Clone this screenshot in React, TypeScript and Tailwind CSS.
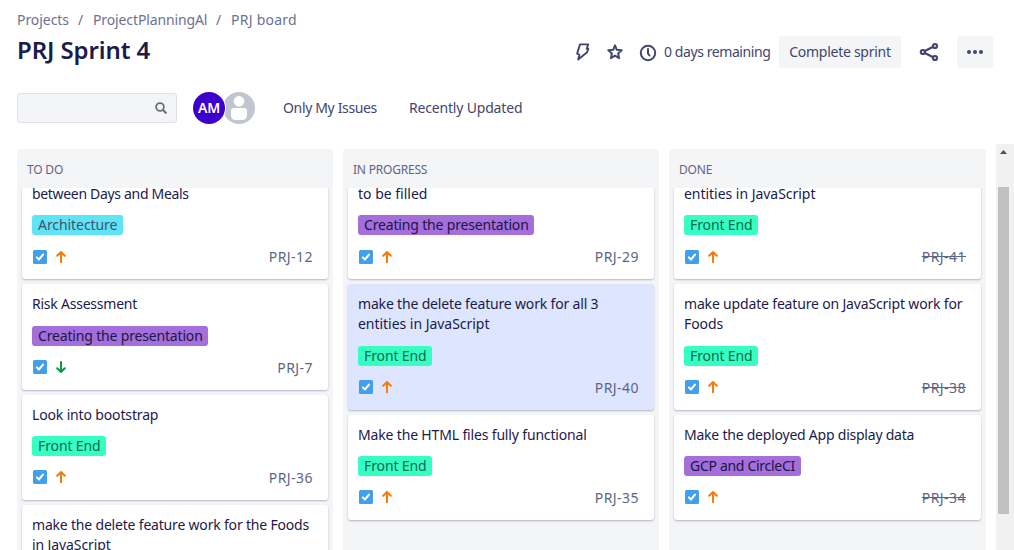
import { Fragment } from "react";

type Line = { text: string; tracking: string };
type Issue = { id: string; title: Line[]; label: keyof typeof LABELS; low?: boolean; active?: boolean };

const LABELS = {
  Architecture: "w-[91px] bg-[#5fe3f6] text-[#42526e] tracking-[-0.07px]",
  "Creating the presentation": "w-[176px] bg-[#a46edb] text-[#201547] tracking-[-0.17px]",
  "Front End": "w-[74px] bg-[#36ffc4] text-[#0b6b4b] tracking-[-0.12px]",
  "GCP and CircleCI": "w-[117px] bg-[#a46edb] text-[#201547] tracking-[-0.3px]",
};

const COLUMNS: { name: string; done?: boolean; issues: Issue[] }[] = [
  {
    name: "TO DO",
    issues: [
      { id: "PRJ-12", title: [{ text: "between Days and Meals", tracking: "tracking-[-0.32px]" }], label: "Architecture" },
      { id: "PRJ-7", title: [{ text: "Risk Assessment", tracking: "tracking-[-0.23px]" }], label: "Creating the presentation", low: true },
      { id: "PRJ-36", title: [{ text: "Look into bootstrap", tracking: "tracking-[-0.15px]" }], label: "Front End" },
      {
        id: "PRJ-37",
        title: [
          { text: "make the delete feature work for the Foods", tracking: "tracking-[-0.19px]" },
          { text: "in JavaScript", tracking: "tracking-[-0.1px]" },
        ],
        label: "Front End",
      },
    ],
  },
  {
    name: "IN PROGRESS",
    issues: [
      { id: "PRJ-29", title: [{ text: "to be filled", tracking: "tracking-[0px]" }], label: "Creating the presentation" },
      {
        id: "PRJ-40",
        title: [
          { text: "make the delete feature work for all 3", tracking: "tracking-[-0.17px]" },
          { text: "entities in JavaScript", tracking: "tracking-[-0.03px]" },
        ],
        label: "Front End",
        active: true,
      },
      { id: "PRJ-35", title: [{ text: "Make the HTML files fully functional", tracking: "tracking-[-0.16px]" }], label: "Front End" },
    ],
  },
  {
    name: "DONE",
    done: true,
    issues: [
      { id: "PRJ-41", title: [{ text: "entities in JavaScript", tracking: "tracking-[-0.03px]" }], label: "Front End" },
      {
        id: "PRJ-38",
        title: [
          { text: "make update feature on JavaScript work for", tracking: "tracking-[-0.17px]" },
          { text: "Foods", tracking: "tracking-[-0.1px]" },
        ],
        label: "Front End",
      },
      { id: "PRJ-34", title: [{ text: "Make the deployed App display data", tracking: "tracking-[-0.23px]" }], label: "GCP and CircleCI" },
    ],
  },
];

function TaskIcon() {
  return (
    <svg width="14" height="14" viewBox="0 0 14 14">
      <rect width="14" height="14" rx="1.5" fill="#429fec" />
      <path d="M3.9 7.4l2 2.1 4.1-4.9" fill="none" stroke="#fff" strokeWidth="2" strokeLinecap="round" strokeLinejoin="round" />
    </svg>
  );
}

function PriorityIcon({ low }: { low?: boolean }) {
  return (
    <svg width="10" height="14" viewBox="0 0 10 14" fill="none" strokeWidth="2" strokeLinecap="round" strokeLinejoin="round">
      {low ? (
        <path d="M5 2v10M1.2 8.2L5 12l3.8-3.8" stroke="#0b9a43" />
      ) : (
        <path d="M5 12.2V2M1.2 5.8L5 2l3.8 3.8" stroke="#f57c0a" />
      )}
    </svg>
  );
}

function Card({ issue, done }: { issue: Issue; done?: boolean }) {
  return (
    <article
      className={`rounded-[3px] p-[10px] shadow-[0_1px_2px_rgba(9,20,66,0.28)] ${issue.active ? "bg-[#dee5ff]" : "bg-white"}`}
    >
      <h3 className="whitespace-nowrap text-[14px] leading-[20px] text-[#1b1b4b]">
        {issue.title.map((line, i) => (
          <Fragment key={line.text}>
            {i > 0 && <br />}
            <span className={line.tracking}>{line.text}</span>
          </Fragment>
        ))}
      </h3>
      <div className={`mt-[11.7px] h-[20px] whitespace-nowrap rounded-[3px] pl-[6px] text-[14px] leading-[20px] ${LABELS[issue.label]}`}>
        {issue.label}
      </div>
      <div className="mt-[12px] flex h-[21.75px] items-start pl-px pr-[5px]">
        <div className="flex gap-[9px] pt-[2.2px]">
          <TaskIcon />
          <PriorityIcon low={issue.low} />
        </div>
        <span className={`ml-auto text-[14px] leading-[20px] tracking-[0.45px] text-[#5e6584] ${done ? "line-through" : ""}`}>
          {issue.id}
        </span>
      </div>
    </article>
  );
}

export default function App() {
  return (
    <div className="flex h-[550px] w-[1014px] flex-col overflow-hidden bg-white font-['Noto_Sans',sans-serif] text-[14px] text-[#42466e]">
      <nav className="mt-[10px] flex h-[20px] pl-[17px] leading-[20px] text-[#6b7290]">
        <span className="w-[61px] tracking-[-0.05px]">Projects</span>
        <span className="w-[15px]">/</span>
        <span className="w-[123px] tracking-[-0.12px]">ProjectPlanningAl</span>
        <span className="w-[15px]">/</span>
        <span className="tracking-[0.25px]">PRJ board</span>
      </nav>
      <header className="flex h-[44px] items-center pl-[17px] pr-[21px]">
        <h1 className="mb-[4px] mr-auto text-[24px] font-semibold leading-[28px] tracking-[-0.1px] text-[#1b1b4b]">PRJ Sprint 4</h1>
        <svg className="mr-[17px]" width="16" height="18" viewBox="0 0 16 18" fill="none" stroke="#42466e" strokeWidth="1.9" strokeLinejoin="round">
          <path d="M6 1.4h8.2l-1.5 4.4h1.6l-1.2 3.4-8.9 7.3 1.2-4.9-2.3-.9z" />
        </svg>
        <svg className="mr-[16px]" width="16" height="16" viewBox="0 0 16 16" fill="none" stroke="#42466e" strokeWidth="2" strokeLinejoin="round">
          <path d="M8 1.4l1.8 4.4 4.9.4-3.6 3.2 1 4.7L8 11.7l-4.1 2.4 1-4.7-3.6-3.2 4.9-.4z" />
        </svg>
        <svg className="mr-[7px] mt-[2px]" width="18" height="18" viewBox="0 0 18 18" fill="none" stroke="#42466e" strokeWidth="2" strokeLinecap="round" strokeLinejoin="round">
          <circle cx="9" cy="9" r="7.2" />
          <path d="M9 5v4.5l1.5 2" />
        </svg>
        <span className="mb-[2px] w-[115px] whitespace-nowrap tracking-[-0.42px]">0 days remaining</span>
        <button className="flex h-[32px] w-[122px] items-center justify-center whitespace-nowrap rounded-[3px] bg-[#f4f5f7] pb-[2px] tracking-[-0.27px]">Complete sprint</button>
        <svg className="mx-[18px]" width="20" height="20" viewBox="0 0 20 20" fill="none" stroke="#42466e" strokeWidth="2.2">
          <circle cx="3.8" cy="10" r="2" />
          <circle cx="16" cy="4" r="2" />
          <circle cx="16" cy="16" r="2" />
          <path d="M5.8 9l8.4-4.2M5.8 11l8.4 4.2" />
        </svg>
        <button className="flex h-[32px] w-[36px] items-center justify-center rounded-[3px] bg-[#f4f5f7]">
          <svg width="18" height="4" viewBox="0 0 18 4" fill="#42466e">
            <circle cx="3" cy="2" r="2" />
            <circle cx="9" cy="2" r="2" />
            <circle cx="15" cy="2" r="2" />
          </svg>
        </button>
      </header>
      <div className="mt-[17px] flex h-[34px] items-center pl-[17px]">
        <div className="flex h-[30px] w-[160px] items-center justify-end rounded-[3px] border border-[#dfe1e6] bg-[#f4f5f7] pr-[9px]">
          <svg width="12" height="12" viewBox="0 0 12 12" fill="none" stroke="#706f6f" strokeWidth="1.8">
            <circle cx="5" cy="5" r="3.9" />
            <path d="M7.8 7.8l3.6 3.6" strokeWidth="2.2" />
          </svg>
        </div>
        <div className="ml-[16px] flex">
          <span className="z-10 flex h-[32px] w-[32px] items-center justify-center rounded-full bg-[#3d00cc] pb-px text-[14px] font-semibold tracking-[-0.3px] text-white shadow-[0_0_0_1px_#fff]">AM</span>
          <svg className="-ml-[2px]" width="32" height="32" viewBox="0 0 32 32">
            <circle cx="16" cy="16" r="16" fill="#c1c5d0" />
            <circle cx="16" cy="9.3" r="5.3" fill="#fff" />
            <path d="M8 18.8a2.8 2.8 0 0 1 2.8-2.8h10.4a2.8 2.8 0 0 1 2.8 2.8v4.4q0 4.8-4.8 4.8h-6.4q-4.8 0-4.8-4.8z" fill="#fff" />
          </svg>
        </div>
        <span className="mb-[2px] ml-[28px] w-[126px] whitespace-nowrap tracking-[-0.35px]">Only My Issues</span>
        <span className="mb-[2px] whitespace-nowrap tracking-[-0.18px]">Recently Updated</span>
      </div>
      <main className="mt-[19px] flex min-h-0 flex-1">
        <div className="mt-[5px] flex gap-[10px] pl-[17px]">
          {COLUMNS.map((column) => (
            <section key={column.name} className={`flex flex-col overflow-hidden rounded-t-[3px] bg-[#f4f5f7] ${column.done ? "w-[317px]" : "w-[316px]"}`}>
              <h2 className="h-[39px] shrink-0 pl-[10px] pt-[12px] text-[12px] leading-[18px] tracking-[-0.2px] text-[#5e6584]">{column.name}</h2>
              <div className="min-h-0 flex-1 overflow-hidden px-[5px]">
                <div className="-mt-[14.38px] flex flex-col gap-[5px]">
                  {column.issues.map((issue) => (
                    <Card key={issue.id} issue={issue} done={column.done} />
                  ))}
                </div>
              </div>
            </section>
          ))}
        </div>
        <div className="ml-[10px] flex w-[18px] flex-col bg-[#f1f1f1] pl-[2px]">
          <svg className="ml-[2px] mt-[6px]" width="7" height="4" viewBox="0 0 7 4">
            <path d="M0 4L3.5 0 7 4z" fill="#505050" />
          </svg>
          <div className="mt-[33px] h-[327px] w-[11px] bg-[#c1c1c1]" />
        </div>
      </main>
    </div>
  );
}
